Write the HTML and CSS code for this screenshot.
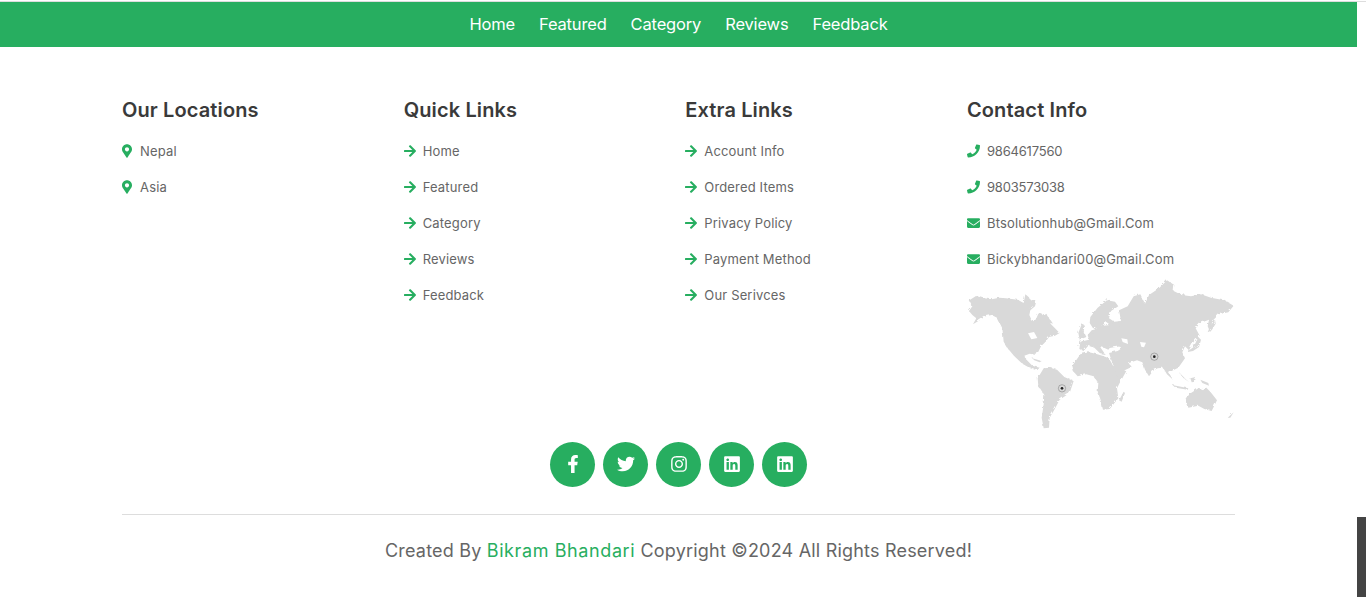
FILE: index.html
```html
<!DOCTYPE html>
<html lang="en">
<head>
<meta charset="utf-8">
<title>Footer</title>
<link rel="stylesheet" href="styles.css">
</head>
<body>
<svg class="defs" aria-hidden="true">
  <filter id="rough" x="-5%" y="-5%" width="110%" height="110%">
    <feTurbulence type="turbulence" baseFrequency="0.09" numOctaves="2" seed="4" result="n"/>
    <feDisplacementMap in="SourceGraphic" in2="n" scale="9"/>
    <feGaussianBlur stdDeviation="0.9"/>
  </filter>
  <symbol id="i-pin" viewBox="0 0 384 512"><path d="M172.268 501.67C26.97 291.031 0 262.429 0 192 0 85.961 85.961 0 192 0s192 85.961 192 192c0 70.429-26.97 99.031-172.268 309.67-9.535 13.774-29.93 13.773-39.464 0zM192 272c44.183 0 80-35.817 80-80s-35.817-80-80-80-80 35.817-80 80 35.817 80 80 80z"/></symbol>
  <symbol id="i-arrow" viewBox="0 0 448 512"><path d="M190.5 66.9l22.2-22.2c9.4-9.4 24.6-9.4 33.9 0L441 239c9.4 9.4 9.4 24.6 0 33.9L246.6 467.3c-9.4 9.4-24.6 9.4-33.9 0l-22.2-22.2c-9.5-9.5-9.3-25 .4-34.3L311.4 296H24c-13.3 0-24-10.7-24-24v-32c0-13.3 10.7-24 24-24h287.4L190.9 101.2c-9.8-9.3-10-24.8-.4-34.3z"/></symbol>
  <symbol id="i-phone" viewBox="0 0 512 512"><path d="M493.4 24.6l-104-24c-11.3-2.6-22.9 3.3-27.5 13.9l-48 112c-4.2 9.8-1.4 21.3 6.9 28l60.6 49.6c-36 76.7-98.9 140.5-177.2 177.2l-49.6-60.6c-6.8-8.3-18.2-11.1-28-6.9l-112 48C3.9 366.5-2 378.1.6 389.4l24 104C27.1 504.2 36.7 512 48 512c256.1 0 464-207.5 464-464 0-11.2-7.7-20.9-18.6-23.4z"/></symbol>
  <symbol id="i-mail" viewBox="0 0 512 512"><path d="M502.3 190.8c3.9-3.1 9.7-.2 9.7 4.7V400c0 26.5-21.5 48-48 48H48c-26.5 0-48-21.5-48-48V195.6c0-5 5.7-7.8 9.7-4.7 22.4 17.4 52.1 39.5 154.1 113.6 21.1 15.4 56.7 47.8 92.2 47.6 35.7.3 72-32.8 92.3-47.6 102-74.1 131.6-96.3 154-113.7zM256 320c23.2.4 56.6-29.2 73.4-41.4 132.7-96.3 142.8-104.7 173.4-128.7 5.8-4.5 9.2-11.5 9.2-18.9v-19c0-26.5-21.5-48-48-48H48C21.5 64 0 85.5 0 112v19c0 7.4 3.4 14.3 9.2 18.9 30.6 23.9 40.7 32.4 173.4 128.7 16.8 12.2 50.2 41.8 73.4 41.4z"/></symbol>
  <symbol id="i-fb" viewBox="0 0 320 512"><path d="M279.14 288l14.22-92.66h-88.91v-60.13c0-25.35 12.42-50.06 52.24-50.06h40.42V6.26S260.43 0 225.36 0c-73.22 0-121.08 44.38-121.08 124.72v70.62H22.89V288h81.39v224h100.17V288z"/></symbol>
  <symbol id="i-tw" viewBox="0 0 512 512"><path d="M459.37 151.716c.325 4.548.325 9.097.325 13.645 0 138.72-105.583 298.558-298.558 298.558-59.452 0-114.68-17.219-161.137-47.106 8.447.974 16.568 1.299 25.34 1.299 49.055 0 94.213-16.568 130.274-44.832-46.132-.975-84.792-31.188-98.112-72.772 6.498.974 12.995 1.624 19.818 1.624 9.421 0 18.843-1.3 27.614-3.573-48.081-9.747-84.143-51.98-84.143-102.985v-1.299c13.969 7.797 30.214 12.67 47.431 13.319-28.264-18.843-46.781-51.005-46.781-87.391 0-19.492 5.197-37.36 14.294-52.954 51.655 63.675 129.3 105.258 216.365 109.807-1.624-7.797-2.599-15.918-2.599-24.04 0-57.828 46.782-104.934 104.934-104.934 30.213 0 57.502 12.67 76.67 33.137 23.715-4.548 46.456-13.32 66.599-25.34-7.798 24.366-24.366 44.833-46.132 57.827 21.117-2.273 41.584-8.122 60.426-16.243-14.292 20.791-32.161 39.308-52.628 54.253z"/></symbol>
  <symbol id="i-ig" viewBox="0 0 448 512"><path d="M224.1 141c-63.6 0-114.9 51.3-114.9 114.9s51.3 114.9 114.9 114.9S339 319.5 339 255.9 287.7 141 224.1 141zm0 189.6c-41.1 0-74.7-33.5-74.7-74.7s33.5-74.7 74.7-74.7 74.7 33.5 74.7 74.7-33.6 74.7-74.7 74.7zm146.4-194.3c0 14.9-12 26.8-26.8 26.8-14.9 0-26.8-12-26.8-26.8s12-26.8 26.8-26.8 26.8 12 26.8 26.8zm76.1 27.2c-1.7-35.9-9.9-67.7-36.2-93.9-26.2-26.2-58-34.4-93.9-36.2-37-2.1-147.9-2.1-184.9 0-35.8 1.7-67.6 9.9-93.9 36.1s-34.4 58-36.2 93.9c-2.1 37-2.1 147.9 0 184.9 1.7 35.9 9.9 67.7 36.2 93.9s58 34.4 93.9 36.2c37 2.1 147.9 2.1 184.9 0 35.9-1.7 67.7-9.9 93.9-36.2 26.2-26.2 34.4-58 36.2-93.9 2.1-37 2.1-147.8 0-184.8zM398.8 388c-7.8 19.6-22.9 34.7-42.6 42.6-29.5 11.7-99.5 9-132.1 9s-102.7 2.6-132.1-9c-19.6-7.8-34.7-22.9-42.6-42.6-11.7-29.5-9-99.5-9-132.1s-2.6-102.7 9-132.1c7.8-19.6 22.9-34.7 42.6-42.6 29.5-11.7 99.5-9 132.1-9s102.7-2.6 132.1 9c19.6 7.8 34.7 22.9 42.6 42.6 11.7 29.5 9 99.5 9 132.1s2.7 102.7-9 132.1z"/></symbol>
  <symbol id="i-li" viewBox="0 0 448 512"><path d="M416 32H31.9C14.3 32 0 46.5 0 64.3v383.4C0 465.5 14.3 480 31.9 480H416c17.6 0 32-14.5 32-32.3V64.3c0-17.8-14.4-32.3-32-32.3zM135.4 416H69V202.2h66.5V416zm-33.2-243c-21.3 0-38.5-17.3-38.5-38.5S80.9 96 102.2 96c21.2 0 38.5 17.3 38.5 38.5 0 21.3-17.2 38.5-38.5 38.5zm282.1 243h-66.4V312c0-24.8-.5-56.7-34.5-56.7-34.6 0-39.9 27-39.9 54.9V416h-66.4V202.2h63.7v29.2h.9c8.9-16.8 30.6-34.5 62.9-34.5 67.2 0 79.7 44.3 79.7 101.9V416z"/></symbol>
</svg>

<div class="topline"></div>
<div class="page">
  <header class="navbar">
    <a href="#">Home</a><a href="#">Featured</a><a href="#">Category</a><a href="#">Reviews</a><a href="#">Feedback</a>
  </header>

  <footer class="footer">
    <div class="columns">
      <section class="col">
        <h3>Our Locations</h3>
        <a class="item" href="#"><svg class="ic ic-pin"><use href="#i-pin"/></svg>Nepal</a>
        <a class="item" href="#"><svg class="ic ic-pin"><use href="#i-pin"/></svg>Asia</a>
      </section>
      <section class="col">
        <h3>Quick Links</h3>
        <a class="item" href="#"><svg class="ic ic-arrow"><use href="#i-arrow"/></svg>Home</a>
        <a class="item" href="#"><svg class="ic ic-arrow"><use href="#i-arrow"/></svg>Featured</a>
        <a class="item" href="#"><svg class="ic ic-arrow"><use href="#i-arrow"/></svg>Category</a>
        <a class="item" href="#"><svg class="ic ic-arrow"><use href="#i-arrow"/></svg>Reviews</a>
        <a class="item" href="#"><svg class="ic ic-arrow"><use href="#i-arrow"/></svg>Feedback</a>
      </section>
      <section class="col">
        <h3>Extra Links</h3>
        <a class="item" href="#"><svg class="ic ic-arrow"><use href="#i-arrow"/></svg>Account Info</a>
        <a class="item" href="#"><svg class="ic ic-arrow"><use href="#i-arrow"/></svg>Ordered Items</a>
        <a class="item" href="#"><svg class="ic ic-arrow"><use href="#i-arrow"/></svg>Privacy Policy</a>
        <a class="item" href="#"><svg class="ic ic-arrow"><use href="#i-arrow"/></svg>Payment Method</a>
        <a class="item" href="#"><svg class="ic ic-arrow"><use href="#i-arrow"/></svg>Our Serivces</a>
      </section>
      <section class="col">
        <h3>Contact Info</h3>
        <a class="item item-num" href="#"><svg class="ic ic-contact"><use href="#i-phone"/></svg>9864617560</a>
        <a class="item item-num" href="#"><svg class="ic ic-contact"><use href="#i-phone"/></svg>9803573038</a>
        <a class="item" href="#"><svg class="ic ic-contact"><use href="#i-mail"/></svg>Btsolutionhub@Gmail.Com</a>
        <a class="item" href="#"><svg class="ic ic-contact"><use href="#i-mail"/></svg>Bickybhandari00@Gmail.Com</a>
        <svg class="map" viewBox="21 24 804 456" role="img" aria-label="World map">
          <g class="land">
            <path d="M25 88L45 75L70 82L92 85L115 80L135 82L170 86L188 96L193 70L203 78L210 88L226 90L222 106L208 118L205 132L214 152L225 145L232 128L240 126L252 140L262 146L270 160L282 172L296 186L282 194L264 198L254 212L240 226L232 242L226 252L206 248L190 254L198 268L214 284L236 290L228 298L208 292L184 278L160 256L140 232L128 212L124 172L108 140L92 132L74 136L52 150L36 160L46 142L34 132L24 120L34 106Z"/>
            <path d="M230 322L248 292L268 290L288 296L310 318L338 330L326 366L296 386L280 416L266 440L264 470L248 472L242 440L248 400L250 372L232 344Z"/>
            <path d="M334 284L358 250L384 244L404 248L424 254L444 262L456 284L472 298L496 300L474 340L468 352L472 382L446 414L426 416L418 384L410 362L412 336L398 316L376 310L350 316L338 302Z"/>
            <path d="M355 234L358 212L384 206L380 192L392 178L414 172L436 170L450 164L436 154L414 170L396 172L386 156L388 138L410 110L438 88L462 92L472 106L450 120L444 142L460 152L480 150L474 118L500 106L518 76L538 70L552 98L564 72L594 52L618 28L640 42L638 60L662 72L690 76L720 70L750 80L790 88L818 104L802 124L774 130L754 150L748 184L740 166L744 146L718 156L704 172L716 194L698 212L684 238L672 226L664 244L672 262L652 290L632 300L624 306L636 326L618 310L606 290L590 292L578 298L564 316L552 296L544 274L528 268L504 276L512 288L494 296L470 316L452 270L444 246L470 240L482 232L470 222L450 226L442 236L424 228L416 226L434 252L420 250L400 230L382 224L368 240Z"/>
            <path d="M384 206L410 166L448 162L476 150L480 226L440 232L416 228L390 222Z"/>
            <path d="M352 186L362 160L372 164L368 180L376 198L356 206Z"/>
            <path d="M740 184L748 164L762 146L764 158L752 178Z"/>
            <path d="M676 244L698 228L712 198L720 206L714 228L696 240Z"/>
            <path d="M674 382L690 366L712 352L726 358L736 350L748 362L768 388L752 420L730 414L712 404L682 410Z"/>
            <path d="M800 440L818 424L824 408L818 424L808 440Z"/>
            <path d="M474 388L488 362L492 366L482 392Z"/>
            <path d="M654 304L676 326L688 336L668 322Z"/>
            <path d="M688 322L704 318L702 332L692 334Z"/>
            <path d="M718 326L742 336L744 344L724 336Z"/>
            <path d="M634 342L682 352L680 356L644 350Z"/>
            <path d="M214 262L242 270L236 274L220 268Z"/>
            <path d="M240 140L256 128L276 158L262 154Z"/>
          </g>
          <g class="water">
            <path d="M484 205L502 208L504 222L488 216Z"/>
            <path d="M540 216L558 218L552 232L544 230Z"/>
            <path d="M204 190L222 186L232 204L214 208Z"/>
          </g>
          <circle class="ring" cx="583" cy="260" r="11"/>
          <circle class="dot" cx="583" cy="260" r="4"/>
          <circle class="ring" cx="306" cy="355" r="11"/>
          <circle class="dot" cx="306" cy="355" r="4"/>
        </svg>
      </section>
    </div>

    <div class="social">
      <a href="#"><svg class="si"><use href="#i-fb"/></svg></a>
      <a href="#"><svg class="si"><use href="#i-tw"/></svg></a>
      <a href="#"><svg class="si"><use href="#i-ig"/></svg></a>
      <a href="#"><svg class="si"><use href="#i-li"/></svg></a>
      <a href="#"><svg class="si"><use href="#i-li"/></svg></a>
    </div>

    <p class="credit">Created By <span>Bikram Bhandari</span> Copyright ©2024 All Rights Reserved!</p>
  </footer>
</div>
<div class="scroll-thumb"></div>
</body>
</html>
```

FILE: styles.css
```css
* { box-sizing: border-box; }
html, body { margin: 0; background: #fff; height: 597px; overflow: hidden; }
body { font-family: Inter, "Open Sans", sans-serif; color: #666; }
a { color: inherit; text-decoration: none; }
.defs { position: absolute; width: 0; height: 0; }

.topline { height: 2px; border-top: 1px solid #fff; background: #ddd; background-clip: content-box; }
.page { margin-right: 9px; }

.navbar {
  height: 45px;
  background: #27ae60;
  display: flex;
  justify-content: center;
  align-items: center;
  gap: 24px;
}
.navbar a { color: #fff; font-size: 16.5px; line-height: 45px; letter-spacing: -.17px; }

.footer { width: 1113px; margin: 0 auto; padding-top: 48px; }
.columns { display: grid; grid-template-columns: repeat(4, 268px); column-gap: 13.67px; }
.col { display: flex; flex-direction: column; align-items: flex-start; }
.col h3 { margin: 0 0 8px; font-size: 20px; line-height: 30px; font-weight: 600; color: #3a3a3a; letter-spacing: .12px; }

.item { display: flex; align-items: center; height: 36px; font-size: 13px; letter-spacing: .16px; color: #666; }
.item-num { letter-spacing: -.2px; }
.ic { fill: #27ae60; flex: none; height: 14px; }
.ic-pin { width: 10px; margin-right: 8px; }
.ic-arrow { width: 12px; margin-right: 7px; }
.ic-contact { width: 13px; margin-right: 7px; }

.map { display: block; width: 268px; height: 152px; margin-top: 1px; }
.land { filter: url(#rough); }
.land path { fill: #d9d9d9; }
.water path { fill: #fff; }
.ring { fill: none; stroke: #777; stroke-width: 1.5; }
.dot { fill: #222; }

.social { display: flex; justify-content: center; gap: 8px; margin-top: 12px; }
.social a { width: 45px; height: 45px; border-radius: 50%; background: #27ae60; display: flex; align-items: center; justify-content: center; }
.si { width: 18px; height: 18px; fill: #fff; margin-bottom: 1px; }

.credit { margin: 27px 0 0; padding-top: 24px; border-top: 1px solid #ddd; text-align: center; font-size: 18px; line-height: 24px; color: #666; letter-spacing: .2px; }
.credit span { color: #27ae60; letter-spacing: .6px; }

.scroll-thumb { position: fixed; right: 0; bottom: 0; width: 9px; height: 80px; background: #444; }
```
